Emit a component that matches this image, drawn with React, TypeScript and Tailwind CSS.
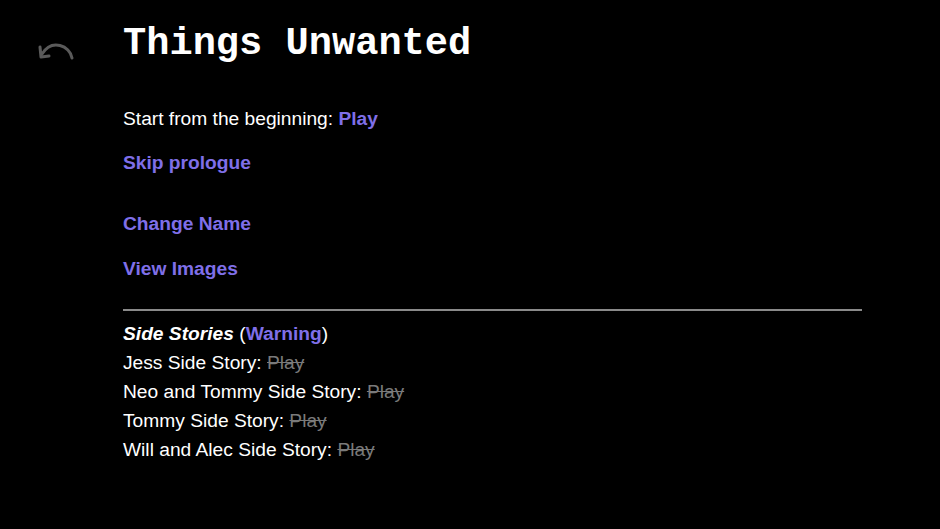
import React from "react";

export default function App() {
  const link = "text-[#7f6fe8] font-bold";
  const stories = [
    "Jess Side Story:",
    "Neo and Tommy Side Story:",
    "Tommy Side Story:",
    "Will and Alec Side Story:",
  ];
  return (
    <div className="w-[940px] h-[529px] bg-black text-white flex" style={{ fontFamily: '"Liberation Sans", Arial, sans-serif' }}>
      <div className="w-[123px] shrink-0 pt-[40px] pl-[36px]">
        <svg width="40" height="22" viewBox="0 0 40 22" fill="none" stroke="#5a5a5a" strokeWidth="3" strokeLinecap="round" strokeLinejoin="round">
          <path d="M36 18 C34 6 16 -2 6 14" />
          <path d="M4 7 L5 17 L13 16" />
        </svg>
      </div>
      <div className="flex flex-col w-[739px]">
        <h1 className="text-[38.7px] font-bold leading-none mt-[25px]" style={{ fontFamily: '"Liberation Mono", "Courier New", monospace' }}>
          Things Unwanted
        </h1>
        <div className="text-[19.2px] leading-[22px] mt-[44px]">
          Start from the beginning: <span className={link}>Play</span>
        </div>
        <div className={`text-[19.2px] leading-[22px] mt-[22px] ${link}`}>Skip prologue</div>
        <div className={`text-[19.2px] leading-[22px] mt-[39px] ${link}`}>Change Name</div>
        <div className={`text-[19.2px] leading-[22px] mt-[23px] ${link}`}>View Images</div>
        <div className="h-[2px] bg-[#8a8a8a] mt-[29px]" />
        <div className="text-[19.2px] leading-[29px] mt-[8px]">
          <div>
            <span className="italic font-bold">Side Stories</span> (<span className={link}>Warning</span>)
          </div>
          {stories.map((s) => (
            <div key={s}>
              {s} <span className="line-through text-[#7a7a7a]">Play</span>
            </div>
          ))}
        </div>
      </div>
    </div>
  );
}
